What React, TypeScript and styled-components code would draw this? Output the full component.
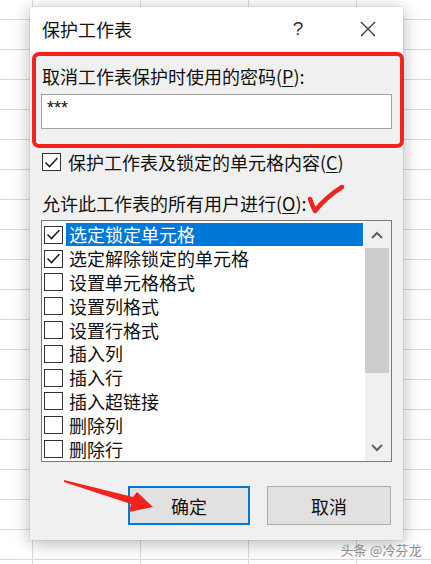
import React from "react";
import styled, { createGlobalStyle } from "styled-components";

const GlobalStyle = createGlobalStyle`
  html, body { margin: 0; padding: 0; }
  body { background: #fff; }
  * { box-sizing: border-box; }
`;

const FONT = `"Noto Sans CJK SC", "Microsoft YaHei", "Noto Sans", sans-serif`;

const Page = styled.div`
  position: relative;
  width: 431px;
  height: 564px;
  overflow: hidden;
  padding: 7px 0 0 30px;
  font-family: ${FONT};
  color: #111;
  background-color: #fff;
  background-image:
    linear-gradient(to bottom, #d9d9d9 1px, transparent 1px),
    linear-gradient(to right, #d9d9d9 1px, transparent 1px);
  background-size: 108px 30px;
  background-position: 32px 19px;
`;

const Dialog = styled.div`
  position: relative;
  width: 373px;
  background: #f0f0f0;
  box-shadow: 0 3px 16px rgba(0, 0, 0, 0.3), 0 0 1px rgba(0, 0, 0, 0.25);
`;

const TitleBar = styled.div`
  display: flex;
  align-items: center;
  height: 44px;
  background: #fff;
`;

const Title = styled.div`
  flex: 1;
  padding-left: 12px;
  font-size: 18px;
  line-height: 24px;
  color: #111;
`;

const TitleButton = styled.div`
  width: 70px;
  height: 44px;
  display: flex;
  align-items: center;
  justify-content: center;
  color: #333;
  font-size: 19px;
  font-family: "Liberation Sans", "Noto Sans", sans-serif;
  font-weight: 300;
`;

const Body = styled.div`
  display: flex;
  flex-direction: column;
  padding: 13px 11px 15px 11px;
`;

const Label = styled.div<{ $mt?: number }>`
  font-size: 18px;
  line-height: 24px;
  margin-top: ${(p) => p.$mt ?? 0}px;
  padding-left: 1px;
  white-space: nowrap;
  u { text-decoration: underline; text-underline-offset: 2px; }
`;

const PasswordInput = styled.div`
  margin-top: 6px;
  height: 35px;
  background: #fff;
  border: 1px solid #a3a3a3;
  padding: 1px 5px;
  font-size: 18px;
  line-height: 24px;
  font-family: "Liberation Sans", sans-serif;
  letter-spacing: 0px;
`;

const CheckRow = styled.div<{ $mt?: number }>`
  display: flex;
  align-items: center;
  gap: 7px;
  height: 24px;
  margin-top: ${(p) => p.$mt ?? 0}px;
  padding-left: 1px;
  font-size: 18px;
  line-height: 24px;
  white-space: nowrap;
  u { text-decoration: underline; text-underline-offset: 2px; }
`;

const Box = styled.span`
  flex: none;
  width: 19px;
  height: 18px;
  border: 1px solid #333;
  background: #fff;
  display: flex;
  align-items: center;
  justify-content: center;
`;

const ListBox = styled.div`
  margin-top: 5px;
  height: 242px;
  border: 1px solid #7a7a7a;
  background: #fff;
  display: flex;
`;

const Items = styled.div`
  flex: 1;
  padding: 2px 2px 0 2px;
  display: flex;
  flex-direction: column;
`;

const Item = styled.div`
  display: flex;
  align-items: center;
  height: 23.8px;
  gap: 3px;
  padding-left: 0px;
`;

const ItemText = styled.span<{ $selected?: boolean }>`
  flex: 1;
  height: 23px;
  display: flex;
  align-items: center;
  padding-left: 3px;
  font-size: 18px;
  line-height: 23px;
  white-space: nowrap;
  color: ${(p) => (p.$selected ? "#fff" : "#111")};
  background: ${(p) => (p.$selected ? "#0078d7" : "transparent")};
`;

const ScrollBar = styled.div`
  width: 26px;
  background: #f0f0f0;
  display: flex;
  flex-direction: column;
`;

const ScrollArrow = styled.div`
  height: 27px;
  display: flex;
  align-items: center;
  justify-content: center;
  padding-right: 2px;
`;

const Thumb = styled.div`
  height: 125px;
  width: 24px;
  background: #cdcdcd;
`;

const Spacer = styled.div`
  flex: 1;
`;

const ButtonRow = styled.div`
  margin-top: 24px;
  display: flex;
  justify-content: flex-end;
  gap: 17px;
  padding-right: 1px;
`;

const Button = styled.div<{ $primary?: boolean }>`
  width: ${(p) => (p.$primary ? 122 : 124)}px;
  height: 39px;
  display: flex;
  align-items: center;
  justify-content: center;
  background: #e1e1e1;
  border: ${(p) => (p.$primary ? "2px solid #0078d7" : "1px solid #adadad")};
  font-size: 18px;
  color: #111;
`;

const RedFrame = styled.div`
  position: absolute;
  left: 2px;
  top: 45px;
  width: 372px;
  height: 96px;
  border: 4px solid #f2231a;
  border-radius: 7px;
  pointer-events: none;
`;

const Overlay = styled.svg`
  position: absolute;
  pointer-events: none;
  overflow: visible;
`;

const Watermark = styled.div`
  position: absolute;
  right: 9px;
  bottom: 6px;
  font-size: 13px;
  line-height: 16px;
  color: #8c8c8c;
  font-family: ${FONT};
  letter-spacing: 0.2px;
`;

const Check = () => (
  <svg width="15" height="13" viewBox="0 0 15 13">
    <polyline points="1.5,6.5 5.5,10.5 13.5,2" fill="none" stroke="#222" strokeWidth="1.6" />
  </svg>
);

const CheckBox = ({ checked }: { checked?: boolean }) => <Box>{checked ? <Check /> : null}</Box>;

const items: { text: string; checked: boolean; selected?: boolean }[] = [
  { text: "选定锁定单元格", checked: true, selected: true },
  { text: "选定解除锁定的单元格", checked: true },
  { text: "设置单元格格式", checked: false },
  { text: "设置列格式", checked: false },
  { text: "设置行格式", checked: false },
  { text: "插入列", checked: false },
  { text: "插入行", checked: false },
  { text: "插入超链接", checked: false },
  { text: "删除列", checked: false },
  { text: "删除行", checked: false },
];

export default function App() {
  return (
    <>
      <GlobalStyle />
      <Page>
        <Dialog>
          <TitleBar>
            <Title>保护工作表</Title>
            <TitleButton>?</TitleButton>
            <TitleButton>
              <svg width="16" height="16" viewBox="0 0 16 16">
                <path d="M1 1 L15 15 M15 1 L1 15" stroke="#333" strokeWidth="1.2" fill="none" />
              </svg>
            </TitleButton>
          </TitleBar>
          <Body>
            <Label>
              取消工作表保护时使用的密码(<u>P</u>):
            </Label>
            <PasswordInput>***</PasswordInput>
            <CheckRow $mt={21}>
              <CheckBox checked />
              <span>
                保护工作表及锁定的单元格内容(<u>C</u>)
              </span>
            </CheckRow>
            <Label $mt={17}>
              允许此工作表的所有用户进行(<u>O</u>):
            </Label>
            <ListBox>
              <Items>
                {items.map((it) => (
                  <Item key={it.text}>
                    <CheckBox checked={it.checked} />
                    <ItemText $selected={it.selected}>{it.text}</ItemText>
                  </Item>
                ))}
              </Items>
              <ScrollBar>
                <ScrollArrow>
                  <svg width="12" height="8" viewBox="0 0 12 8">
                    <polyline points="1,7 6,2 11,7" fill="none" stroke="#606060" strokeWidth="2" />
                  </svg>
                </ScrollArrow>
                <Thumb />
                <Spacer />
                <ScrollArrow>
                  <svg width="12" height="8" viewBox="0 0 12 8">
                    <polyline points="1,1 6,6 11,1" fill="none" stroke="#606060" strokeWidth="2" />
                  </svg>
                </ScrollArrow>
              </ScrollBar>
            </ListBox>
            <ButtonRow>
              <Button $primary>确定</Button>
              <Button>取消</Button>
            </ButtonRow>
          </Body>
          <RedFrame />
          <Overlay
            style={{ left: 276, top: 176 }}
            width="40"
            height="34"
            viewBox="0 0 40 34"
          >
            <path
              d="M4 16 Q6 22 9 28 Q20 14 36 4"
              fill="none"
              stroke="#f2231a"
              strokeWidth="4.5"
              strokeLinecap="round"
              strokeLinejoin="round"
            />
          </Overlay>
          <Overlay
            style={{ left: 30, top: 470 }}
            width="100"
            height="40"
            viewBox="0 0 100 40"
          >
            <polygon
              points="4,3 73,20 77,15 93,30 69,35 71,27 4,5"
              fill="#f2231a"
            />
          </Overlay>
        </Dialog>
        <Watermark>头条 @冷芬龙</Watermark>
      </Page>
    </>
  );
}
